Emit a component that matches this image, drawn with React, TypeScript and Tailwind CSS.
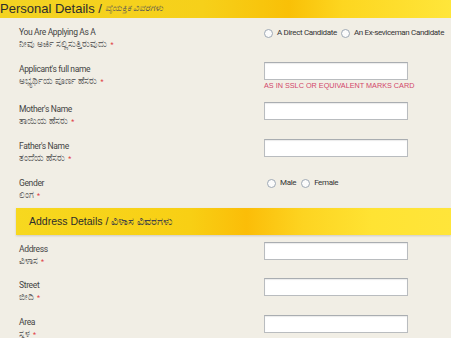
const labelFont = { fontFamily: "Roboto, 'Noto Sans', sans-serif" };

function Req() {
  return <span className="ml-[3px] text-[7px] text-[#e0393e]">*</span>;
}

function Label({ en, kn }: { en: string; kn: string }) {
  return (
    <div className="w-[245px] shrink-0 text-[8.5px] leading-[12px] tracking-[-0.35px] text-[#444]">
      <div>{en}</div>
      <div className="text-[9px] tracking-normal text-[#666]">
        {kn}
        <Req />
      </div>
    </div>
  );
}

function TextBox() {
  return (
    <div className="h-[18px] w-[144px] border border-[#b9bcbf] border-t-[#a9adb1] bg-white shadow-[inset_0_1px_1px_rgba(0,0,0,0.08)]" />
  );
}

function Radio({ label }: { label: string }) {
  return (
    <label className="flex items-center gap-[4px]">
      <span className="h-[9px] w-[9px] rounded-full border border-[#9ea8b4] bg-[#fbfbfb]" />
      <span>{label}</span>
    </label>
  );
}

export default function App() {
  return (
    <div
      className="h-[338px] w-[451px] overflow-hidden bg-[#f1eee5]"
      style={labelFont}
    >
      <div
        className="flex h-[18px] items-center bg-[linear-gradient(90deg,#f3d322_0%,#f6d01a_45%,#f9c007_64%,#fdd620_76%,#ffe63a_100%)] text-[13px] text-[#2d2d2d]"
        style={{ fontFamily: "'Liberation Sans', Arial, sans-serif" }}
      >
        Personal Details /{" "}
        <span className="ml-[3px] text-[9px] italic text-[#555]">ವೈಯಕ್ತಿಕ ವಿವರಗಳು</span>
      </div>

      <div className="pl-[19px] pt-[8px]">
        <div className="flex h-[36px]">
          <Label en="You Are Applying As A" kn="ನೀವು ಅರ್ಜಿ ಸಲ್ಲಿಸುತ್ತಿರುವುದು" />
          <div className="flex h-[14px] items-center gap-[4px] text-[8px] tracking-[-0.35px] text-[#333]">
            <Radio label="A Direct Candidate" />
            <Radio label="An Ex-seviceman Candidate" />
          </div>
        </div>

        <div className="flex h-[40px]">
          <div className="pt-[1px]">
            <Label en="Applicant's full name" kn="ಅಭ್ಯರ್ಥಿಯ ಪೂರ್ಣ ಹೆಸರು" />
          </div>
          <div>
            <TextBox />
            <div
              className="mt-[1px] text-[7.25px] leading-[9px] text-[#d2466a]"
              style={{ fontFamily: "'Liberation Sans', Arial, sans-serif" }}
            >
              AS IN SSLC OR EQUIVALENT MARKS CARD
            </div>
          </div>
        </div>

        <div className="flex h-[37px]">
          <div className="pt-[1px]">
            <Label en="Mother's Name" kn="ತಾಯಿಯ ಹೆಸರು" />
          </div>
          <TextBox />
        </div>

        <div className="flex h-[37px]">
          <div className="pt-[1px]">
            <Label en="Father's Name" kn="ತಂದೆಯ ಹೆಸರು" />
          </div>
          <TextBox />
        </div>

        <div className="flex h-[32px]">
          <div className="pt-[1px]">
            <Label en="Gender" kn="ಲಿಂಗ" />
          </div>
          <div className="flex h-[14px] items-center gap-[5px] pl-[3px] text-[8px] tracking-[-0.35px] text-[#333]">
            <Radio label="Male" />
            <Radio label="Female" />
          </div>
        </div>
      </div>

      <div
        className="ml-[16px] flex h-[27px] items-center bg-[linear-gradient(90deg,#f7d81f_0%,#f8cf14_40%,#fbbd08_53%,#fdd421_66%,#ffe333_82%,#ffe53a_100%)] pl-[13px] text-[10.5px] text-[#2d2d2d] shadow-[0_1px_2px_rgba(0,0,0,0.15)]"
        style={{ fontFamily: "'Liberation Sans', Arial, sans-serif" }}
      >
        Address Details /{" "}
        <span className="ml-[3px] text-[11px] text-[#444]">ವಿಳಾಸ ವಿವರಗಳು</span>
      </div>

      <div className="pl-[19px] pt-[7px]">
        <div className="flex h-[36px]">
          <div className="pt-[1px]">
            <Label en="Address" kn="ವಿಳಾಸ" />
          </div>
          <TextBox />
        </div>
        <div className="flex h-[37px]">
          <div className="pt-[1px]">
            <Label en="Street" kn="ಬೀದಿ" />
          </div>
          <TextBox />
        </div>
        <div className="flex h-[37px]">
          <div className="pt-[1px]">
            <Label en="Area" kn="ಸ್ಥಳ" />
          </div>
          <TextBox />
        </div>
      </div>
    </div>
  );
}
